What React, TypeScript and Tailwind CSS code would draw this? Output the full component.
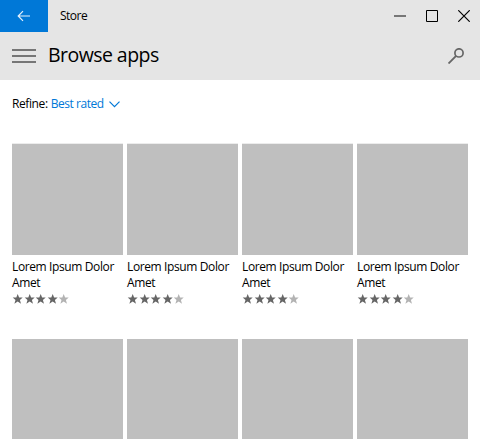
import React from "react";

const apps = ["Lorem Ipsum Dolor Amet", "Lorem Ipsum Dolor Amet", "Lorem Ipsum Dolor Amet", "Lorem Ipsum Dolor Amet"];

function Star({ filled }: { filled: boolean }) {
  return (
    <svg width="11" height="11" viewBox="0 0 11 11" className={filled ? "text-[#666666]" : "text-[#b3b3b3]"}>
      <path
        fill="currentColor"
        d="M5.7 0 L7.1 3.5 L10.7 3.6 L7.9 5.9 L9 9.7 L5.7 7.6 L2.4 9.7 L3.5 5.9 L.7 3.6 L4.3 3.5 Z"
      />
    </svg>
  );
}

function Rating({ value }: { value: number }) {
  return (
    <div className="mt-[3px] flex gap-[0.5px]">
      {[1, 2, 3, 4, 5].map((n) => (
        <Star key={n} filled={n <= value} />
      ))}
    </div>
  );
}

function AppCard({ name }: { name: string }) {
  return (
    <div className="w-[111px] shrink-0">
      <div className="h-[112px] border-t border-[#ececec] bg-[#bfbfbf]" />
      <p className="mt-1 text-[12px] leading-4 tracking-[-0.38px]">{name}</p>
      <Rating value={4} />
    </div>
  );
}

function TitleBar() {
  return (
    <div className="flex h-8 items-center">
      <button className="flex h-8 w-12 items-center justify-center bg-[#0078d7]" aria-label="Back">
        <svg width="14" height="12" viewBox="0 0 14 12" fill="none" stroke="#e5f1fb" strokeWidth="1.2">
          <path d="M13 6H1.5M6 1.2L1.2 6L6 10.8" />
        </svg>
      </button>
      <span className="ml-3 text-[12px] leading-4 tracking-[-0.5px]">Store</span>
      <div className="ml-auto mr-2.5 flex items-center gap-5">
        <svg width="12" height="12" viewBox="0 0 12 12">
          <path d="M0 6H12" stroke="#767676" strokeWidth="2" />
        </svg>
        <svg width="12" height="12" viewBox="0 0 12 12" fill="none" stroke="#000">
          <path d="M.5 .5H11.5V11.5H.5Z" />
        </svg>
        <svg width="12" height="12" viewBox="0 0 12 12" fill="none" stroke="#000" strokeWidth="1.2">
          <path d="M.3 .3L11.7 11.7M11.7 .3L.3 11.7" />
        </svg>
      </div>
    </div>
  );
}

export default function App() {
  return (
    <div className="h-[439px] w-[480px] overflow-hidden bg-white font-['Open_Sans','Noto_Sans',sans-serif] text-black">
      <header className="h-20 bg-[#e5e5e5]">
        <TitleBar />
        <div className="flex h-12 items-center pl-3 pr-4">
          <svg width="24" height="14" viewBox="0 0 24 14" stroke="#767676" strokeWidth="2">
            <path d="M0 1H24M0 7H24M0 13H24" />
          </svg>
          <h1 className="-mt-0.5 ml-3 text-[19.5px] leading-6 tracking-[-0.55px]">Browse apps</h1>
          <svg className="ml-auto" width="16" height="16" viewBox="0 0 16 16" fill="none" stroke="#666">
            <circle cx="11" cy="4.9" r="4.1" strokeWidth="1.7" />
            <path d="M8.1 7.8L.5 15.5" strokeWidth="1.9" />
          </svg>
        </div>
      </header>
      <div className="flex h-[63px] items-start pl-3 pt-4 text-[12px] leading-4">
        <span className="tracking-[-0.4px]">Refine:</span>
        <span className="ml-[3px] tracking-[-0.45px] text-[#0078d7]">Best rated</span>
        <svg className="ml-[5px] mt-[5px]" width="11" height="7" viewBox="0 0 11 7" fill="none" stroke="#0078d7" strokeWidth="1.2">
          <path d="M.5 .6L5.5 5.6L10.5 .6" />
        </svg>
      </div>
      <main className="grid grid-cols-[repeat(4,111px)] grid-rows-[196px_100px] gap-x-1 pl-3">
        {apps.map((name, i) => (
          <AppCard key={i} name={name} />
        ))}
        {apps.map((_, i) => (
          <div key={i + 4} className="bg-[#bfbfbf]" />
        ))}
      </main>
    </div>
  );
}
